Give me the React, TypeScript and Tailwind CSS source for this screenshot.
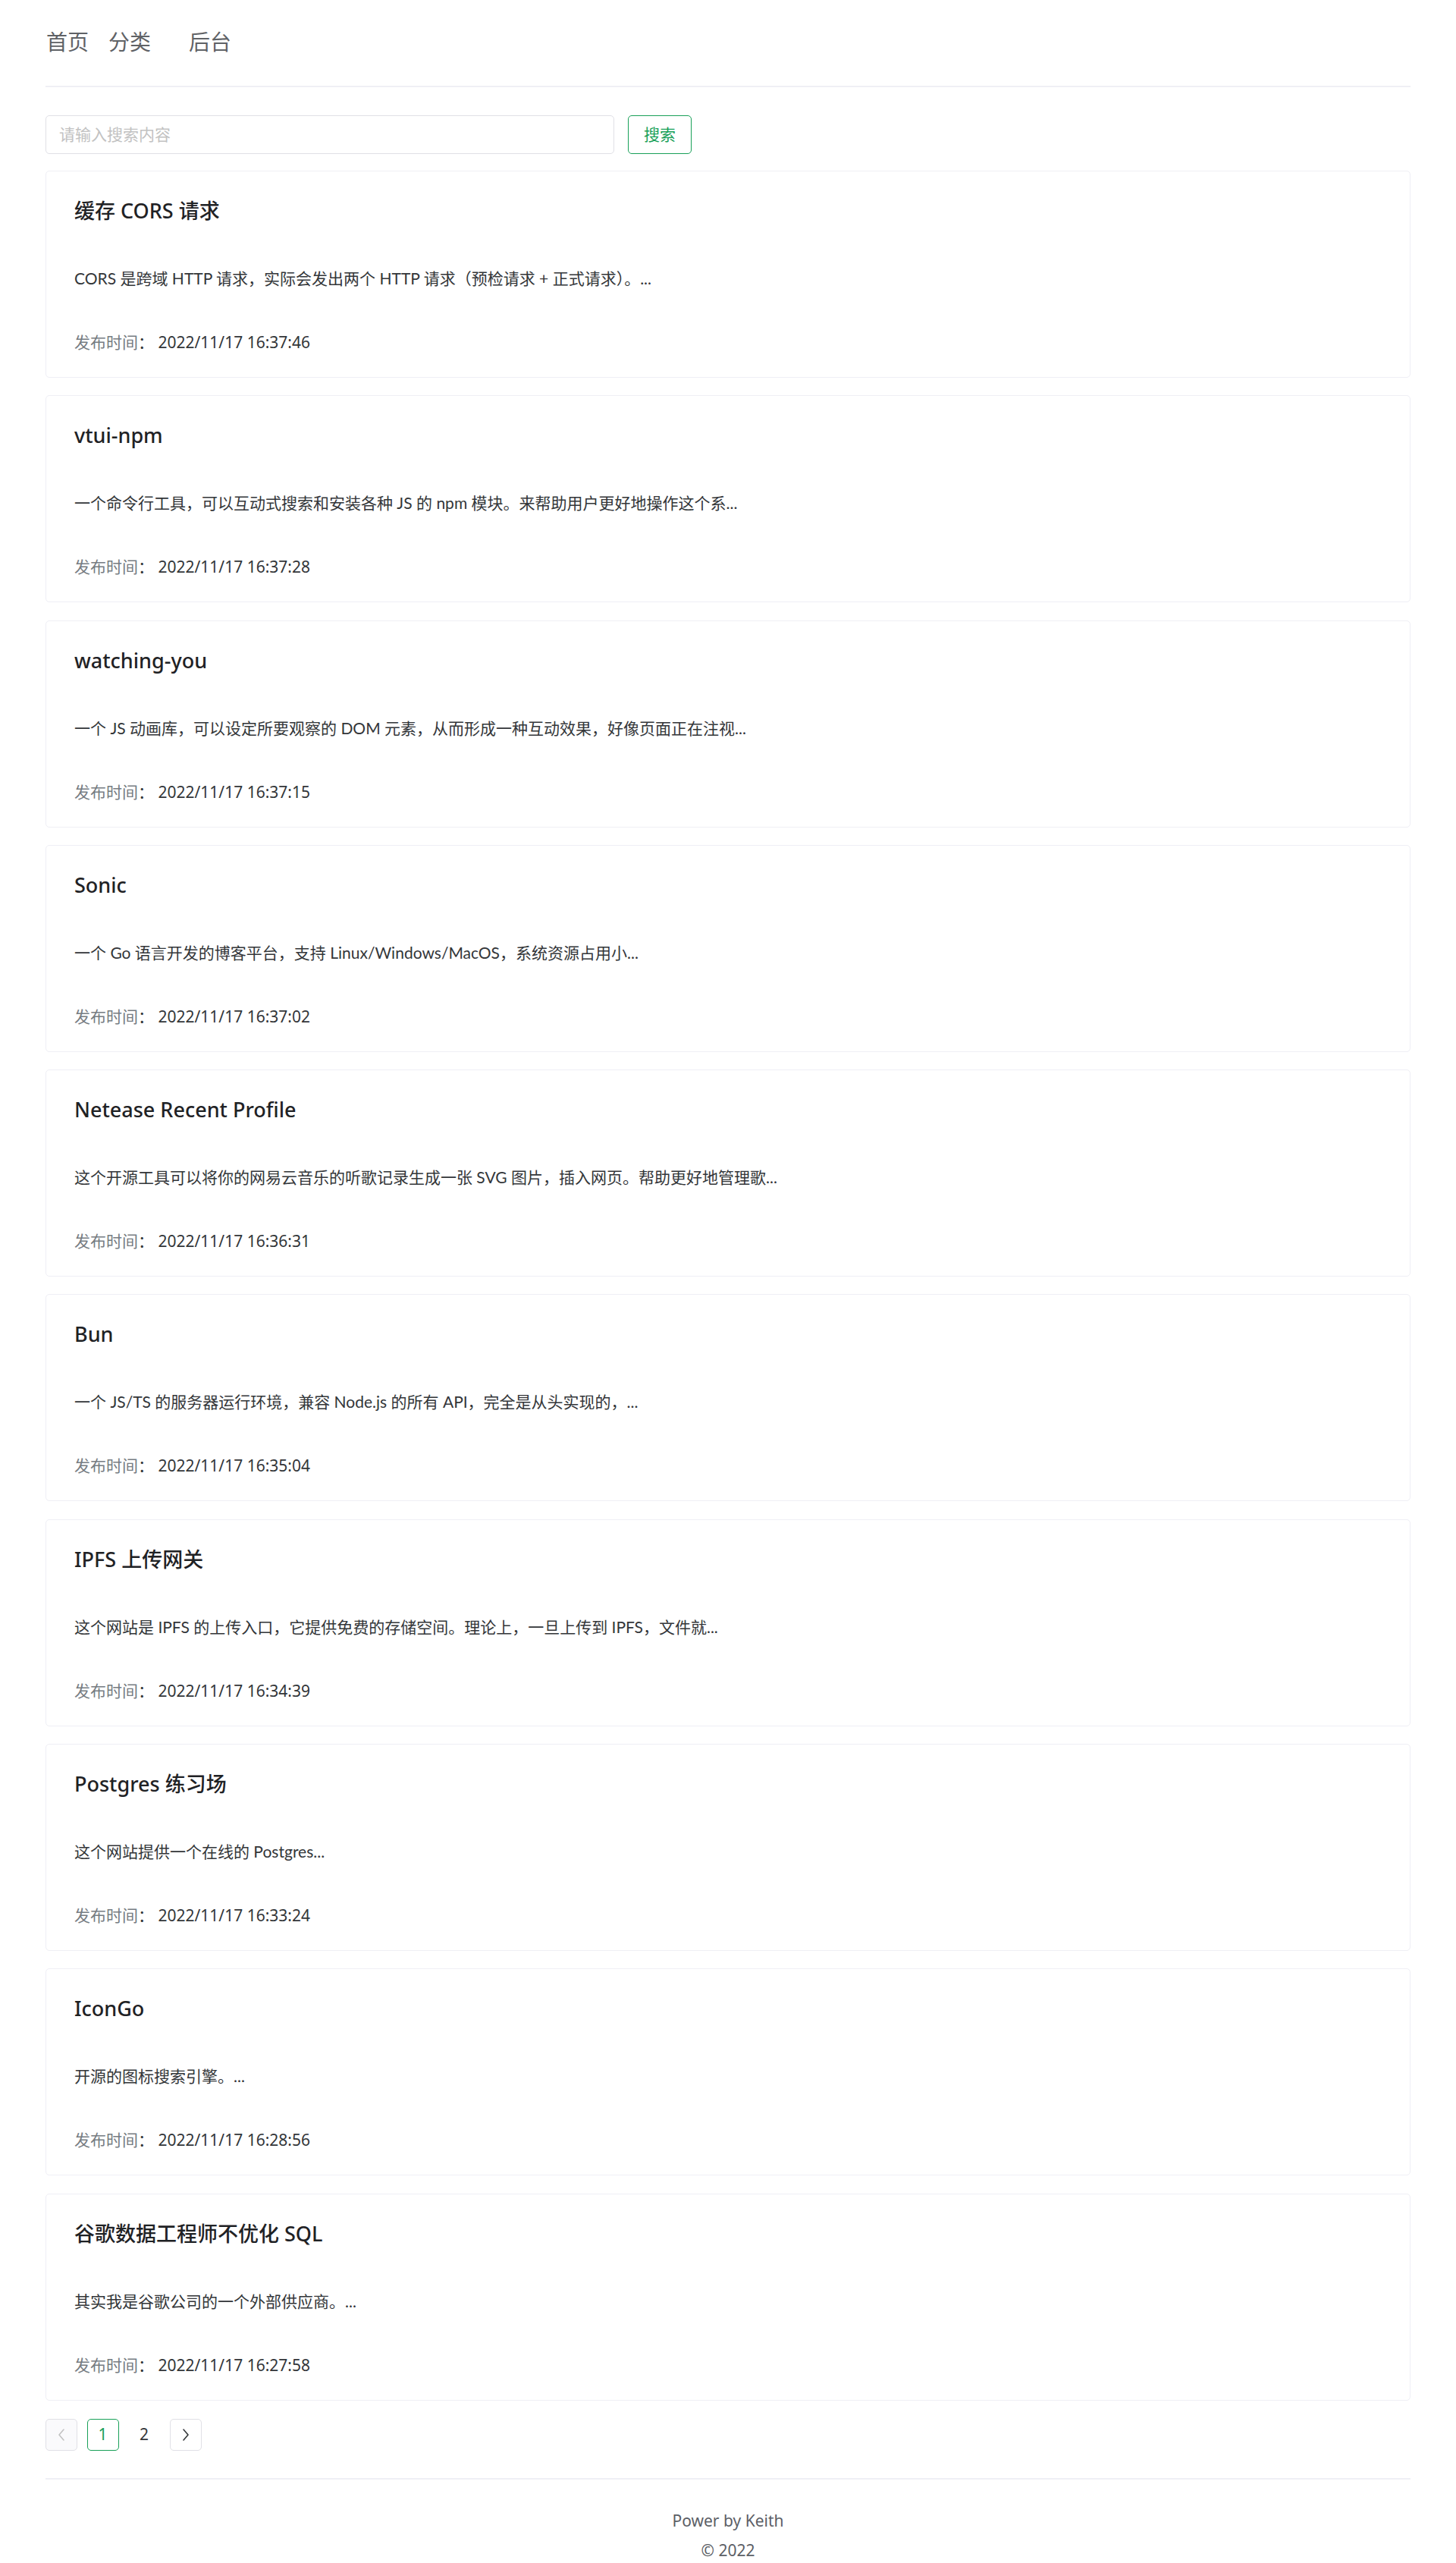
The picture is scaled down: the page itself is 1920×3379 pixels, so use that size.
import React from "react";

const posts = [
  {
    title: "缓存 CORS 请求",
    desc: "CORS 是跨域 HTTP 请求，实际会发出两个 HTTP 请求（预检请求 + 正式请求）。...",
    time: "2022/11/17 16:37:46",
  },
  {
    title: "vtui-npm",
    desc: "一个命令行工具，可以互动式搜索和安装各种 JS 的 npm 模块。来帮助用户更好地操作这个系...",
    time: "2022/11/17 16:37:28",
  },
  {
    title: "watching-you",
    desc: "一个 JS 动画库，可以设定所要观察的 DOM 元素，从而形成一种互动效果，好像页面正在注视...",
    time: "2022/11/17 16:37:15",
  },
  {
    title: "Sonic",
    desc: "一个 Go 语言开发的博客平台，支持 Linux/Windows/MacOS，系统资源占用小...",
    time: "2022/11/17 16:37:02",
  },
  {
    title: "Netease Recent Profile",
    desc: "这个开源工具可以将你的网易云音乐的听歌记录生成一张 SVG 图片，插入网页。帮助更好地管理歌...",
    time: "2022/11/17 16:36:31",
  },
  {
    title: "Bun",
    desc: "一个 JS/TS 的服务器运行环境，兼容 Node.js 的所有 API，完全是从头实现的，...",
    time: "2022/11/17 16:35:04",
  },
  {
    title: "IPFS 上传网关",
    desc: "这个网站是 IPFS 的上传入口，它提供免费的存储空间。理论上，一旦上传到 IPFS，文件就...",
    time: "2022/11/17 16:34:39",
  },
  {
    title: "Postgres 练习场",
    desc: "这个网站提供一个在线的 Postgres...",
    time: "2022/11/17 16:33:24",
  },
  {
    title: "IconGo",
    desc: "开源的图标搜索引擎。...",
    time: "2022/11/17 16:28:56",
  },
  {
    title: "谷歌数据工程师不优化 SQL",
    desc: "其实我是谷歌公司的一个外部供应商。...",
    time: "2022/11/17 16:27:58",
  },
];

function PostCard({ title, desc, time }: { title: string; desc: string; time: string }) {
  return (
    <div className="h-[273px] rounded-[5px] border border-[#efeff5] bg-white pl-[37px] pr-[37px] pt-[34px]">
      <div className="text-[27px] leading-[36px] font-medium text-[#1f2225]">{title}</div>
      <p
        className="mt-[56px] text-[21px] leading-[30px] text-[#333639]"
        style={{ fontFamily: '"Lato", "Noto Sans CJK SC", sans-serif' }}
      >
        {desc}
      </p>
      <p className="mt-[54px] text-[21px] leading-[30px] text-[#333639]">
        <span className="text-[#767c82]">发布时间</span>： {time}
      </p>
    </div>
  );
}

function Chevron({ dir, color }: { dir: "left" | "right"; color: string }) {
  return (
    <svg width="10" height="18" viewBox="0 0 10 18" fill="none">
      <path
        d={dir === "left" ? "M8 2 L2 9 L8 16" : "M2 2 L8 9 L2 16"}
        stroke={color}
        strokeWidth="1.6"
        strokeLinecap="round"
        strokeLinejoin="round"
      />
    </svg>
  );
}

export default function App() {
  return (
    <div
      className="min-h-[3379px] bg-white px-[60px]"
      style={{ fontFamily: '"Noto Sans", "Noto Sans CJK SC", sans-serif' }}
    >
      {/* header */}
      <div className="h-[113px] pt-[36px]">
        <nav className="flex text-[28px] leading-[38px] text-[#5f6266]">
          <a className="ml-[1px]">首页</a>
          <a className="ml-[26px]">分类</a>
          <a className="ml-[50px]">后台</a>
        </nav>
      </div>
      <div className="h-[2px] bg-[#efeff5]" />

      {/* search */}
      <div className="mt-[37px] flex gap-[18px]">
        <div className="flex h-[51px] w-[750px] items-center rounded-[5px] border border-[#e0e0e6] pl-[17px]">
          <input
            className="w-full bg-transparent text-[21px] text-[#333639] outline-none placeholder:text-[#c2c2c2]"
            placeholder="请输入搜索内容"
          />
        </div>
        <button className="flex h-[51px] w-[84px] items-center justify-center rounded-[5px] border border-[#18a058] text-[21px] text-[#18a058]">
          搜索
        </button>
      </div>

      {/* posts */}
      <div className="mt-[22px] flex flex-col gap-[23.3px]">
        {posts.map((p) => (
          <PostCard key={p.time} {...p} />
        ))}
      </div>

      {/* pagination */}
      <div className="mt-[24px] flex gap-[12.5px] text-[21px]">
        <div className="flex h-[42px] w-[42px] items-center justify-center rounded-[5px] border border-[#e0e0e6] bg-[#fafafc]">
          <Chevron dir="left" color="#c2c2c2" />
        </div>
        <div className="flex h-[42px] w-[42px] items-center justify-center rounded-[5px] border border-[#18a058] text-[#18a058]">
          1
        </div>
        <div className="flex h-[42px] w-[42px] items-center justify-center text-[#333639]">2</div>
        <div className="flex h-[42px] w-[42px] items-center justify-center rounded-[5px] border border-[#e0e0e6]">
          <Chevron dir="right" color="#333639" />
        </div>
      </div>

      {/* footer */}
      <div className="mt-[36px] h-[2px] bg-[#efeff5]" />
      <div className="flex flex-col items-center gap-[5px] pt-[37px] text-[21px] leading-[34px] text-[#5c6066]">
        <div>Power by Keith</div>
        <div>© 2022</div>
      </div>
    </div>
  );
}
